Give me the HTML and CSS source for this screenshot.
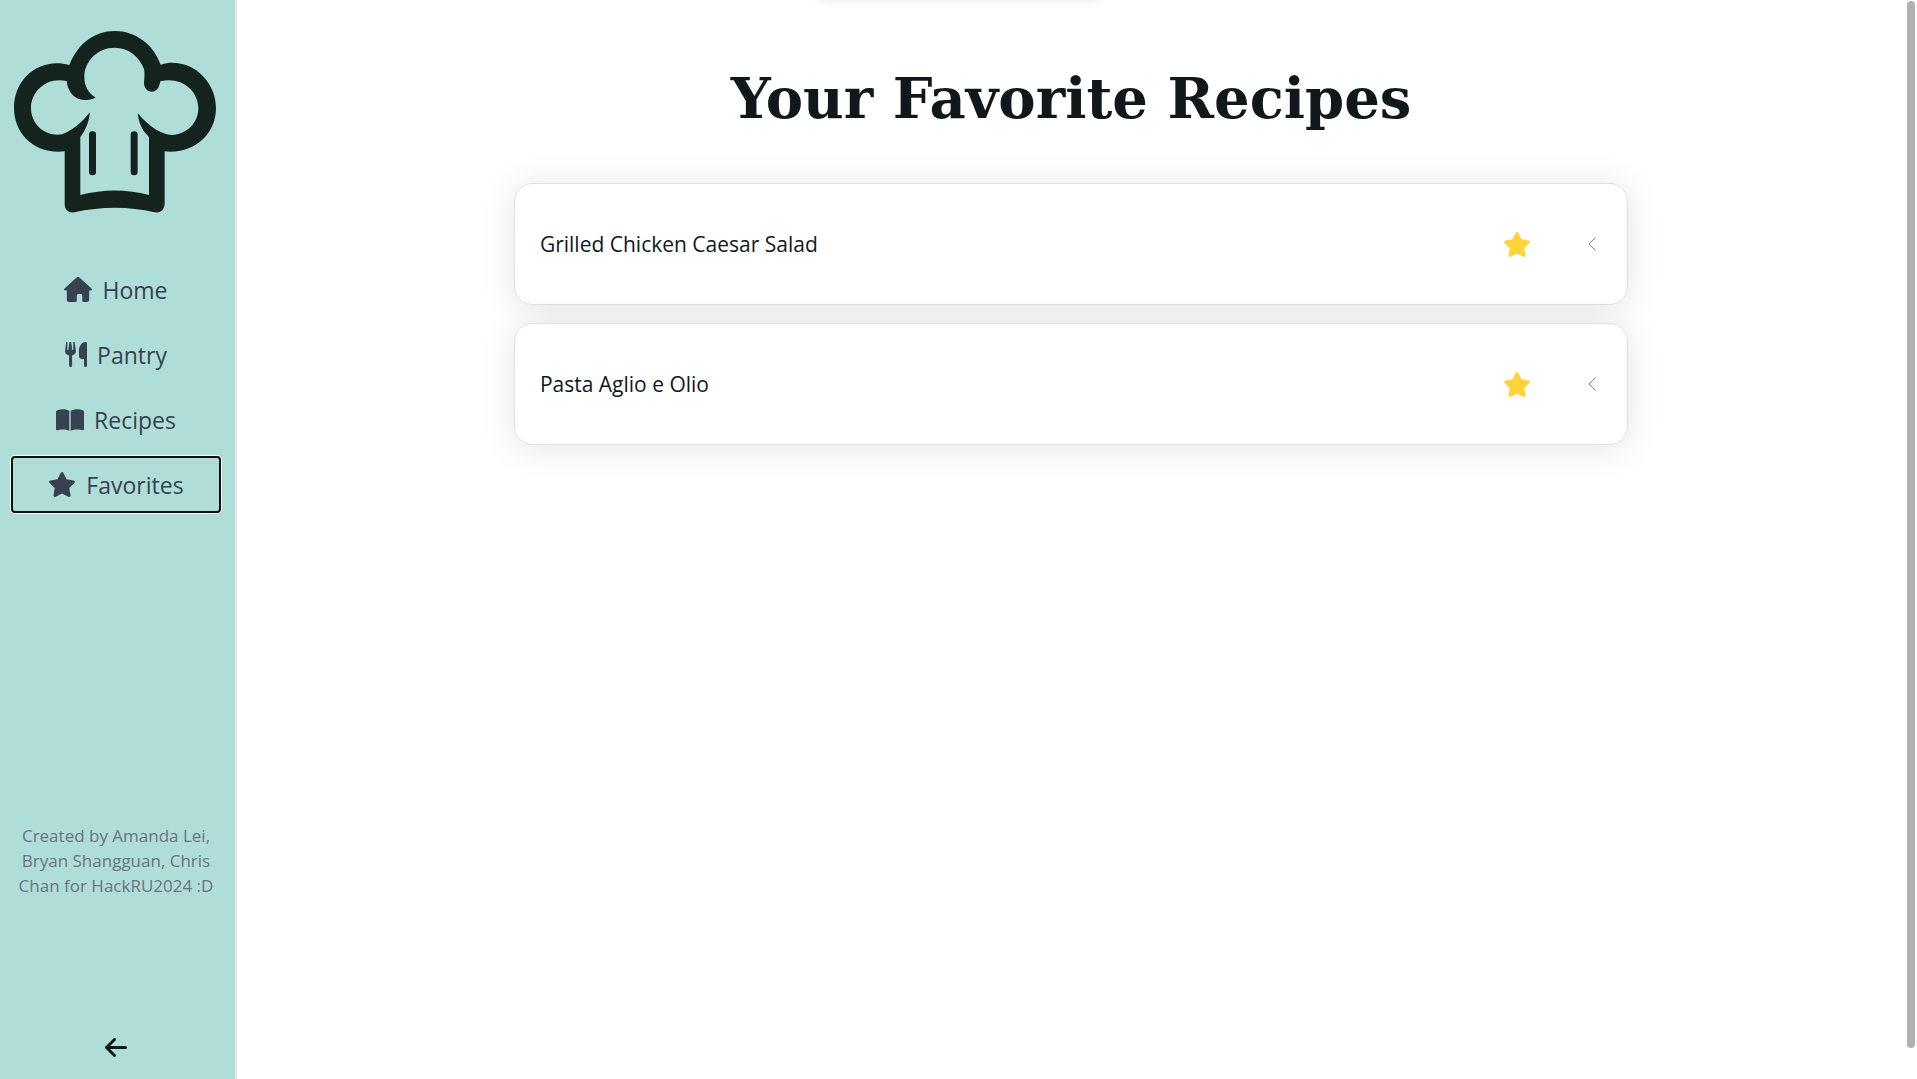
FILE: index.html
```
<!DOCTYPE html>
<html lang="en">
<head>
    <meta charset="UTF-8">
    <meta name="viewport" content="width=device-width, initial-scale=1.0">
    <title>Favorite Recipes</title>
    <link rel="stylesheet" href="styles.css">
</head>
<body>
    <div class="layout">
        <aside class="sidebar">
            <a href="#" class="logo" aria-label="Home page">
                <svg viewBox="0 0 606 546">
                    <g fill="#15231f">
                        <path d="M166 102C192 36 243 0 302 0C365 0 418 40 440 101C455 96 463 95 474 95C547 95 606 157 606 231C606 310 540 370 452 361V516C452 536 440 547 422 544C345 526 262 526 181 544C164 548 152 536 152 520V361C60 371 0 307 0 231C0 142 77 78 166 102ZM158 150C96 137 51 182 51 231C51 280 94 318 144 310C174 299 202 276 228 244C224 275 216 296 199 318V492C268 474 338 474 405 492V318C386 300 374 278 371 247C408 290 442 310 474 312C519 309 553 276 553 231C552 175 498 136 439 151C436 171 427 182 414 182C400 182 390 171 390 155C392 137 392 116 389 112C374 75 343 50 302 50C252 50 211 89 211 139C211 165 223 187 245 200C202 219 164 200 158 150Z"/>
                        <rect x="225" y="301" width="21" height="132" rx="10"/>
                        <rect x="350" y="301" width="21" height="132" rx="10"/>
                    </g>
                </svg>
            </a>
            <nav class="nav">
                <a href="#">
                    <svg viewBox="0 0 28 25" width="28" height="25"><path d="M12.600.6a2 2 0 0 1 2.800 0l12.100 10.800c1 .9.500 2.100-.8 2.100h-1.500v9.300a2.200 2.200 0 0 1-2.200 2.200h-3.300a1.500 1.500 0 0 1-1.500-1.500v-5a1.500 1.500 0 0 0-1.500-1.500h-2.400a1.500 1.500 0 0 0-1.500 1.500v5a1.500 1.500 0 0 1-1.500 1.500H5a2.200 2.200 0 0 1-2.200-2.200v-9.300H1.300c-1.300 0-1.800-1.200-.8-2.100z"/></svg>
                    <span>Home</span>
                </a>
                <a href="#">
                    <svg viewBox="0 0 22 25" width="22" height="25"><path d="M1.200 0h1.200v8h.9L4.400 0h1.800l1.100 8h.9V0h1.400l1.300 9c0 2.400-1.400 3.800-3.800 4.500v10a1.500 1.500 0 0 1-3 0v-10C1.500 12.800 0 11.400 0 9zM20.500 0c.9 0 1.500.6 1.500 1.500v22a1.500 1.500 0 0 1-3 0V17h-2.200c-1.500 0-2.800-1.200-2.800-2.800V8c0-4.500 3.500-8 6.500-8z"/></svg>
                    <span>Pantry</span>
                </a>
                <a href="#">
                    <svg viewBox="0 0 28 25" width="28" height="25"><path d="M13.300 3.800v20C10 22.200 5 22 1.300 23.200.500 23.400 0 23 0 22.300V4.500c0-.5.200-.9.700-1.100C5 1.700 10 1.800 13.300 3.800zM14.700 3.800v20c3.300-1.600 8.300-1.800 12-.6.800.2 1.300-.2 1.300-.9V4.500c0-.5-.2-.9-.7-1.100-4.300-1.700-9.300-1.600-12.600.4z"/></svg>
                    <span>Recipes</span>
                </a>
                <a href="#" class="active">
                    <svg viewBox="0 0 576 512" width="28" height="25"><path d="M316.900 18C311.600 7 300.400 0 288.100 0s-23.400 7-28.800 18L195 150.300 51.400 171.500c-12 1.800-22 10.200-25.700 21.700s-.7 24.200 7.900 32.700L137.800 329 113.200 474.700c-2 12 3 24.200 12.900 31.300s23 8 33.800 2.300l128.300-68.500 128.300 68.500c10.800 5.700 23.900 4.900 33.800-2.300s14.900-19.300 12.900-31.300L438.500 329 542.700 225.900c8.600-8.500 11.700-21.200 7.900-32.700s-13.700-19.900-25.700-21.700L381.200 150.300 316.900 18z"/></svg>
                    <span>Favorites</span>
                </a>
            </nav>
            <p class="credits">Created by Amanda Lei, Bryan Shangguan, Chris Chan for HackRU2024 :D</p>
            <button class="collapse" aria-label="Collapse sidebar">
                <svg viewBox="0 0 22 19" width="22" height="19"><path d="M9.500 1.500l-8 8 8 8M2 9.500h18.500"/></svg>
            </button>
        </aside>
        <main class="content">
            <h1>Your Favorite Recipes</h1>
            <div class="recipes">
                <article class="recipe">
                    <h2>Grilled Chicken Caesar Salad</h2>
                    <button class="star" aria-label="Remove from favorites">
                        <svg viewBox="0 0 576 512" width="28" height="25"><path d="M316.900 18C311.600 7 300.400 0 288.100 0s-23.400 7-28.800 18L195 150.300 51.400 171.500c-12 1.800-22 10.200-25.700 21.700s-.7 24.200 7.900 32.700L137.800 329 113.200 474.700c-2 12 3 24.200 12.900 31.300s23 8 33.800 2.300l128.300-68.500 128.300 68.500c10.800 5.700 23.900 4.900 33.800-2.300s14.900-19.300 12.900-31.300L438.500 329 542.700 225.900c8.600-8.500 11.700-21.200 7.900-32.700s-13.700-19.900-25.700-21.700L381.200 150.300 316.900 18z"/></svg>
                    </button>
                    <button class="expand" aria-label="Show recipe">
                        <svg viewBox="0 0 8 14" width="8" height="14"><path d="M7.500.5L1 7l6.500 6.500"/></svg>
                    </button>
                </article>
                <article class="recipe">
                    <h2>Pasta Aglio e Olio</h2>
                    <button class="star" aria-label="Remove from favorites">
                        <svg viewBox="0 0 576 512" width="28" height="25"><path d="M316.900 18C311.600 7 300.400 0 288.100 0s-23.400 7-28.800 18L195 150.300 51.400 171.500c-12 1.800-22 10.200-25.700 21.700s-.7 24.200 7.900 32.700L137.800 329 113.200 474.700c-2 12 3 24.200 12.900 31.300s23 8 33.800 2.300l128.300-68.500 128.300 68.500c10.800 5.700 23.900 4.900 33.800-2.300s14.900-19.300 12.900-31.300L438.500 329 542.700 225.900c8.600-8.500 11.700-21.200 7.900-32.700s-13.700-19.900-25.700-21.700L381.200 150.300 316.900 18z"/></svg>
                    </button>
                    <button class="expand" aria-label="Show recipe">
                        <svg viewBox="0 0 8 14" width="8" height="14"><path d="M7.500.5L1 7l6.500 6.500"/></svg>
                    </button>
                </article>
            </div>
        </main>
    </div>
    <div class="toast"></div>
    <div class="scroll_thumb"></div>
</body>
</html>
```
FILE: styles.css
```
*{
    padding: 0;
    margin: 0;
    box-sizing: border-box;
}

body{
    font-family: "Segoe UI", "Open Sans", "Noto Sans", sans-serif;
    color: #11181c;
    background: #fff;
}

button{
    border: none;
    background: none;
    cursor: pointer;
}

svg{
    display: block;
}

.layout{
    display: flex;
    min-height: 100vh;
}

/* sidebar */
.sidebar{
    display: flex;
    flex-direction: column;
    width: 237px;
    flex-shrink: 0;
    padding: 31px 14px 18px 11px;
    background: #afded8;
    border-right: 2px solid #e5e7eb;
}

.logo{
    padding: 0 5px 0 3px;
    margin-bottom: 48px;
}

.nav{
    display: flex;
    flex-direction: column;
    gap: 8px;
}

.nav a{
    display: flex;
    align-items: center;
    justify-content: center;
    gap: 10px;
    height: 57px;
    font-size: 23px;
    color: #374151;
    text-decoration: none;
    border-radius: 4px;
}

.nav svg{
    fill: #374151;
}

.nav a.active{
    border: 2px solid #101010;
    box-shadow: 0 0 0 1px #fff;
}

.credits{
    margin-top: auto;
    margin-bottom: 136px;
    font-size: 17px;
    line-height: 25px;
    text-align: center;
    color: #6b7280;
}

.collapse{
    align-self: center;
    padding: 4px;
}

.collapse svg{
    fill: none;
    stroke: #11181c;
    stroke-width: 3;
    stroke-linecap: round;
    stroke-linejoin: round;
}

/* favorites list */
.content{
    flex: 1;
    padding: 61px 12px 0 0;
}

.content h1{
    font-family: Georgia, "DejaVu Serif", serif;
    font-size: 56px;
    line-height: 75px;
    font-weight: bold;
    text-align: center;
}

.recipes{
    display: flex;
    flex-direction: column;
    gap: 18px;
    width: 66.8%;
    margin: 47px auto 0;
}

.recipe{
    display: flex;
    align-items: center;
    height: 122px;
    padding: 0 31px 0 25px;
    background: #fff;
    border: 1px solid #e1e1e3;
    border-radius: 18px;
    box-shadow: 0 3px 36px rgba(0, 0, 0, 0.11);
}

.recipe h2{
    flex: 1;
    font-size: 21px;
    font-weight: normal;
}

.star{
    margin-right: 57px;
}

.star svg{
    fill: #ffd43b;
}

.expand svg{
    fill: none;
    stroke: #85858f;
    stroke-width: 1;
}

.toast{
    position: fixed;
    bottom: 100%;
    left: 50%;
    width: 280px;
    height: 40px;
    margin-left: -140px;
    box-shadow: 0 0 10px rgba(0, 0, 0, 0.1);
}

.scroll_thumb{
    position: fixed;
    top: 1px;
    right: 2px;
    width: 8px;
    height: 97%;
    border-radius: 4px;
    background: #b1b1b1;
}
```
